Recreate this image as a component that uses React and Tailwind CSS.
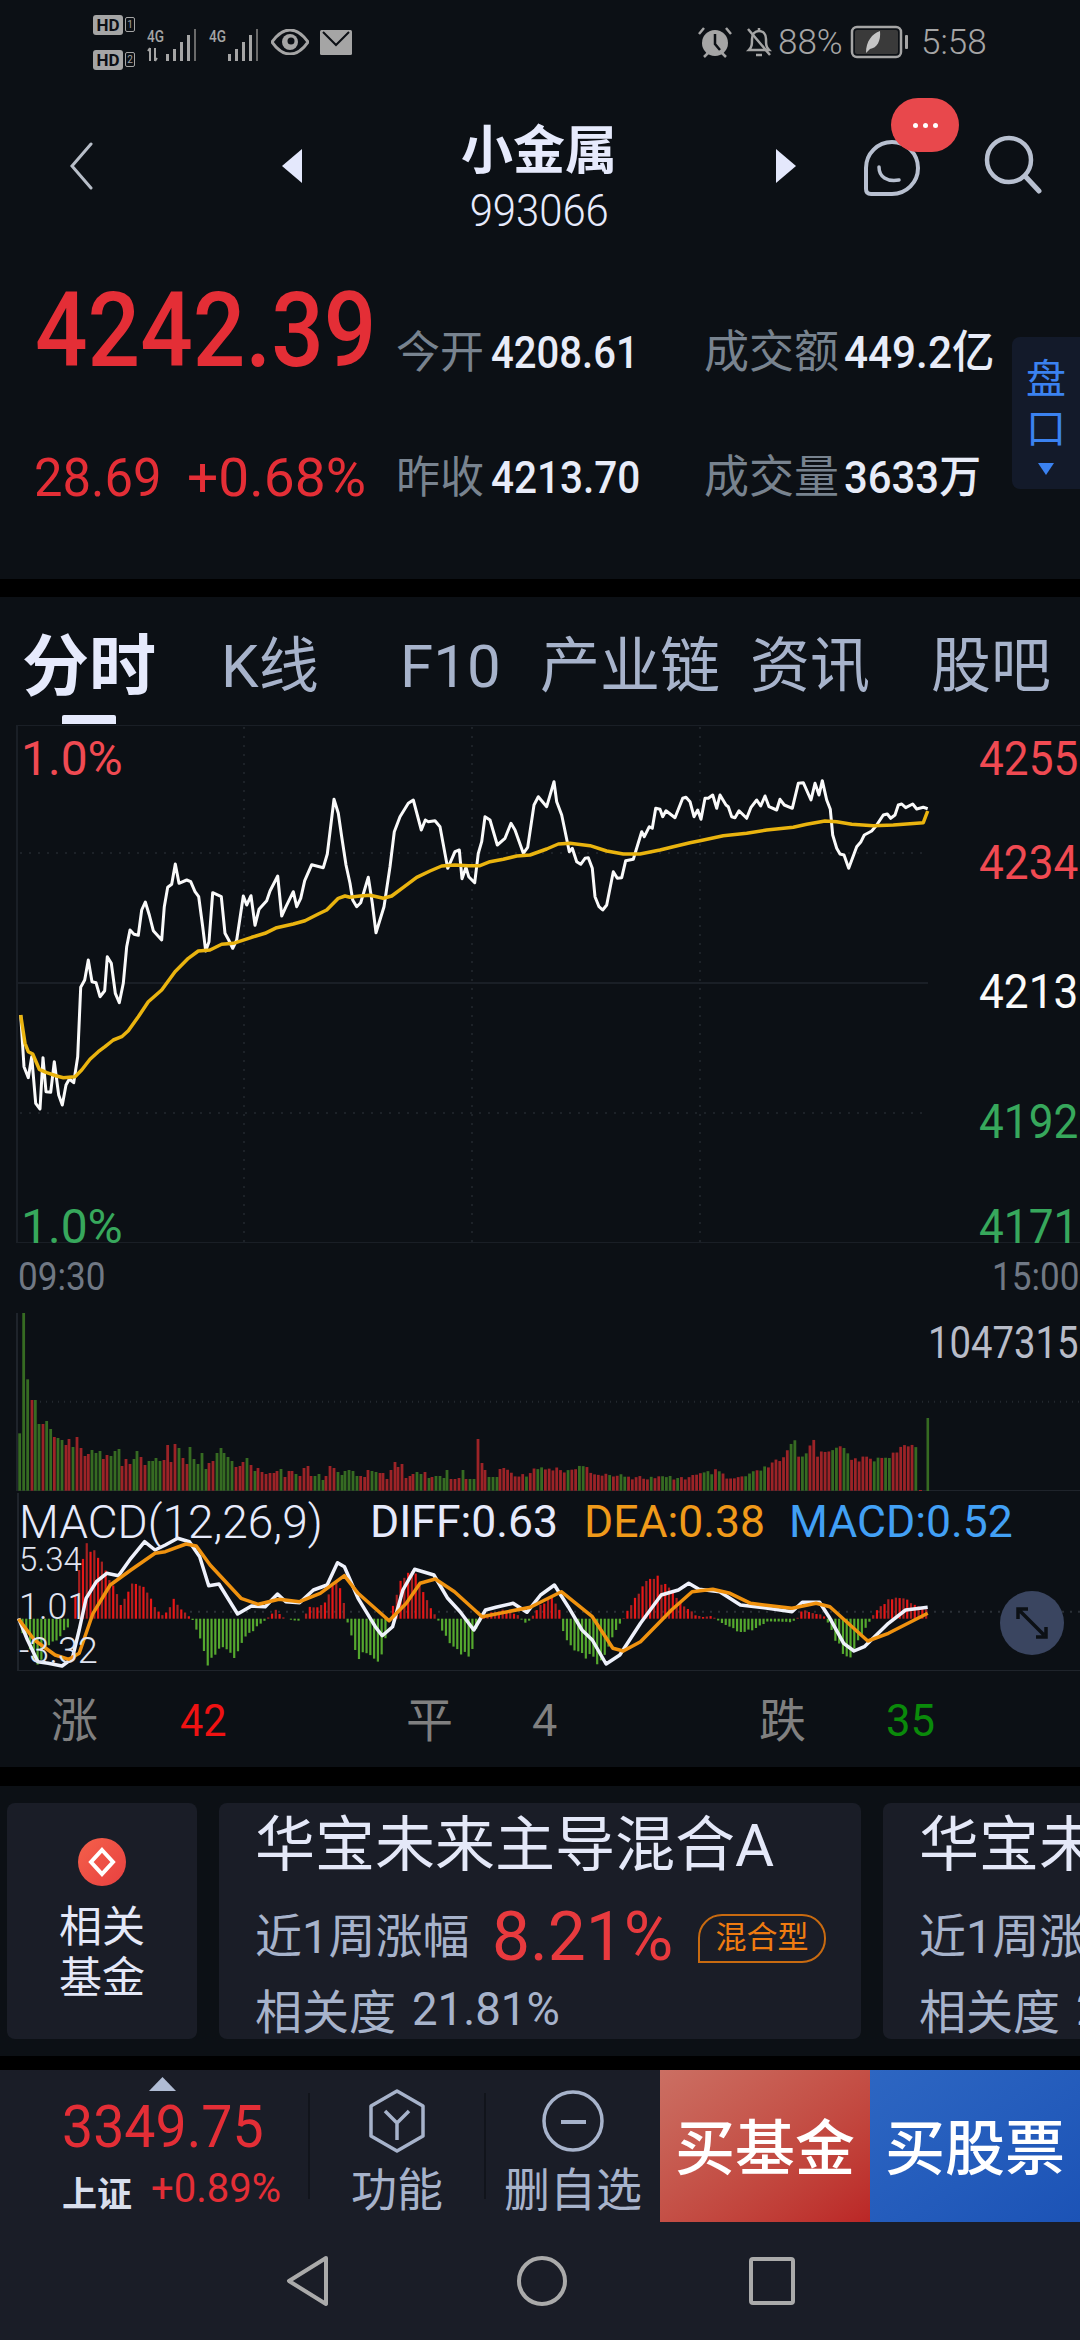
import React from "react";

const crop = (arr, x0, y0, k = 3) => arr.map(([x, y]) => [x0 + x / k, y0 + y / k]);
const pts = (arr) => arr.map(([x, y]) => `${x.toFixed(1)},${y.toFixed(1)}`).join(" ");

const white = [
  ...crop([[32,705],[42,860],[55,893],[65,830],[77,970],[90,987],[99,833],[108,935],[122,937],[133,845],[146,945],[157,975],[168,915],[178,897],[191,908],[203,830],[212,622],[224,600],[235,540],[246,605],[258,608],[270,650],[284,632],[292,530],[304,550],[316,640],[328,668],[340,610],[350,500],[360,450],[372,463],[385,466],[395,390],[406,366],[418,405],[430,452],[455,480],[463,380],[473,322],[485,313],[496,252],[507,310],[530,300],[542,305],[555,335],[566,350],[578,440],[587,513],[597,485],[608,338],[634,350],[645,460],[656,480],[668,505],[680,480],[700,348],[710,375],[723,347],[735,436],[747,388],[770,362],[780,333],[803,288],[815,408],[828,380],[850,335],[860,380],[872,355],[884,302],[905,254],[940,263],[952,222],[972,58],[985,100],[995,170]], 10, 780),
  ...crop([[18,285],[30,340],[38,390],[50,410],[62,398],[85,322],[97,400],[108,488],[132,410],[150,290],[163,185],[180,140],[205,100],[220,90],[244,180],[256,150],[265,155],[285,152],[300,170],[323,295],[345,245],[358,240],[366,326],[378,292],[386,320],[404,338],[415,250],[425,215],[435,140],[450,150],[472,225],[495,205],[513,160],[525,180],[550,250],[563,232],[582,105],[595,80],[620,110],[642,35],[650,95],[665,135],[688,245],[697,235],[710,275],[722,283],[735,265],[745,263],[757,295],[765,380],[777,410],[788,420],[800,405],[820,305],[832,325],[845,323],[857,272],[880,268],[905,185],[913,200],[928,170],[937,175],[947,115],[960,118]], 340, 770),
  ...crop([[68,140],[78,122],[105,143],[128,85],[138,82],[150,95],[162,140],[173,120],[183,148],[195,85],[205,85],[218,75],[230,115],[240,75],[258,105],[265,110],[275,140],[285,143],[297,122],[320,145],[333,112],[350,90],[362,108],[375,78],[387,110],[410,120],[420,88],[433,105],[457,115],[475,40],[490,38],[513,90],[525,40],[537,75],[547,32],[560,90],[571,118],[578,195],[590,235],[600,252],[612,255],[626,295],[650,230],[663,215],[673,195],[695,183],[710,165],[730,135],[742,132],[752,145],[765,135],[775,105],[785,102],[797,113],[818,102],[830,117],[850,112],[863,116]], 640, 770),
];
const yellow = [
  ...crop([[32,705],[45,790],[55,815],[68,822],[88,868],[110,878],[140,888],[160,893],[195,890],[215,870],[240,838],[265,815],[285,800],[310,780],[335,770],[355,752],[385,710],[415,665],[455,630],[495,575],[535,535],[565,513],[600,510],[635,493],[670,490],[725,472],[765,460],[800,443],[850,432],[885,422],[925,402],[950,390],[985,355],[1005,348]], 10, 780),
  ...crop([[30,382],[60,378],[90,376],[130,385],[155,378],[190,352],[230,322],[270,303],[305,288],[345,285],[385,287],[420,287],[450,275],[490,268],[530,258],[570,255],[620,237],[655,222],[690,220],[750,227],[800,243],[850,252],[900,252]], 340, 770),
  ...crop([[60,240],[100,230],[150,218],[180,212],[250,197],[320,190],[380,180],[460,172],[500,163],[555,153],[590,155],[635,163],[700,167],[760,165],[850,158],[863,123]], 640, 770),
];

const macdWhite = [[27,445],[40,510],[55,575],[70,580],[90,588],[105,565],[115,480],[125,385],[140,335],[155,310],[172,317],[190,265],[210,215],[225,240],[240,225],[258,205],[275,215],[290,260],[303,347],[318,342],[345,432],[365,408],[385,410],[403,372],[415,395],[435,398],[455,360],[475,345],[490,278],[500,290],[520,385],[545,470],[555,497],[570,470],[585,360],[602,298],[630,315],[650,385],[668,425],[688,480],[705,420],[720,412],[745,400],[765,427],[785,375],[805,345],[825,410],[845,480],[860,510],[880,582],[900,555],[930,460],[960,375],[985,360],[1000,340],[1015,358],[1045,365],[1075,405],[1115,415],[1150,425],[1165,397],[1190,397],[1205,445],[1225,520],[1240,543],[1255,530],[1290,460],[1315,420],[1347,412]];
const macdOrange = [[27,447],[50,510],[80,555],[100,568],[115,550],[135,430],[160,345],[190,300],[225,250],[240,245],[270,222],[285,228],[305,285],[350,385],[375,403],[405,388],[435,395],[465,370],[500,317],[520,370],[565,452],[590,400],[610,340],[632,327],[660,365],[700,440],[770,412],[815,365],[860,440],[890,535],[905,543],[930,515],[975,420],[1005,365],[1035,358],[1060,370],[1090,400],[1150,415],[1185,400],[1205,410],[1260,513],[1290,490],[1347,430]];
const toM = (a) => a.map(([x, y]) => [x / 1.452, 1470 + y / 3]);

const histEnv = [[27,0],[30,-30],[40,-70],[50,-130],[55,-140],[65,-100],[75,-70],[85,-55],[100,-20],[105,5],[112,110],[125,222],[135,200],[150,160],[165,100],[175,45],[190,95],[205,105],[215,80],[225,30],[235,10],[243,20],[252,55],[265,25],[275,5],[280,-5],[290,-60],[302,-150],[315,-90],[330,-85],[340,-125],[355,-60],[370,-30],[385,-5],[390,5],[400,28],[410,5],[420,-2],[432,-8],[440,3],[450,35],[470,40],[480,95],[490,125],[500,40],[503,0],[510,-50],[520,-115],[535,-100],[550,-125],[560,-60],[565,0],[575,70],[590,150],[600,140],[612,90],[625,30],[635,3],[642,-40],[655,-80],[670,-100],[685,-105],[692,-20],[700,0],[705,15],[730,25],[752,10],[758,-5],[765,-15],[770,0],[785,40],[800,65],[815,15],[818,-50],[835,-90],[850,-110],[870,-135],[885,-70],[900,-15],[905,0],[915,40],[935,105],[955,125],[970,90],[990,45],[1010,10],[1020,5],[1035,8],[1040,-3],[1060,-25],[1075,-43],[1095,-30],[1115,-8],[1150,-10],[1158,3],[1165,25],[1195,10],[1200,-3],[1215,-70],[1232,-125],[1250,-50],[1262,-10],[1270,20],[1290,55],[1310,65],[1330,40],[1347,25]];
const lerp = (env, x) => {
  for (let i = 1; i < env.length; i++) {
    if (x <= env[i][0]) {
      const [a, b] = env[i - 1];
      const [c, d] = env[i];
      return b + ((d - b) * (x - a)) / (c - a || 1);
    }
  }
  return env[env.length - 1][1];
};
const pr = (i) => {
  const v = Math.sin(i * 12.9898) * 43758.5453;
  return v - Math.floor(v);
};
const hist = [];
for (let i = 0; i < 241; i++) {
  const zx = 27 + i * 5.49;
  const v = lerp(histEnv, zx);
  const h = (v * (0.9 + 0.2 * pr(i))) / 3;
  hist.push({ x: zx / 1.452, h, i });
}

const volHead = "59G400 71G36 83G238 96R300 106G300 117G372 129R372 140G363 152G387 163R411 174G414 186G420 198R435 207R417 219G441 231R411 243R444 255R468 265R462 276G450 288G459 300G453 310R477 321R465 333G468 345G453 357G447 366R498 378R477 390R492 402G477 411G453 423R471 435R495 447G483 458G483 468G474 480G483 492R480 503R435 513R486 525R432 537G444 549R474 561R492 570G441 582G477 594G492 606G459 618G507 627R489 639R483 651G459 663G444 672G459 684G471 696G483 708R501 720R498 729R486 741G474 753R495 765G513 774R504 786R516 798R522 810R519 822R519 831R513 843G507 855R531 867R513 876R513 888G522 900R528 912R504 924R498 933R528 945G528 957G522 969G540 978R528 990R498 1002R504 1014G516 1026G525 1035G513 1047G510 1059G513 1071G528 1082R528 1094R531 1104R510 1116G513 1128G516 1140R519 1149R519 1161R537 1173R510 1185R486 1194R501 1206R492 1218R534 1230R528 1239R522 1251G516 1263G522 1275R516 1287G534 1296R531 1308G528 1320G528 1332G534 1341G510 1353R537 1365R537 1377R534 1389G510 1398R537 1410G537 1422G537 1434R417 1446R489 1455R510 1467G531 1479G531 1491G531 1500R507"
  .split(" ")
  .map((s) => {
    const m = s.match(/(\d+)([RG])(\d+)/);
    return { x: +m[1] / 3, red: m[2] === "R", top: 1300 + +m[3] / 3 };
  });
const volEnv = [[725,1048],[735,1050],[745,1060],[760,1068],[780,1040],[800,1050],[810,1040],[820,1060],[835,1048],[852,1042],[870,1070],[895,1060],[920,1072],[960,1075],[1000,1072],[1040,1055],[1060,1080],[1090,1065],[1115,1040],[1140,1010],[1153,958],[1160,1015],[1170,1005],[1181,955],[1187,1005],[1210,985],[1220,972],[1235,1020],[1260,1015],[1270,1018],[1295,1005],[1310,985],[1325,975],[1332,985]];
const volTail = [];
for (let x = 503.8, i = 0; x < 918; x += 3.78, i++) {
  const z = lerp(volEnv, x * 1.452);
  const spike = z < 965;
  volTail.push({
    x,
    red: spike || Math.sin(i * 0.55) + Math.sin(i * 1.7 + 1) > -0.35,
    top: 1120 + (z + (spike ? 0 : (pr(i + 7) - 0.5) * 16)) / 3,
  });
}
const bars = [...volHead, ...volTail];

function Label({ children, className }) {
  return <div className={"absolute whitespace-nowrap leading-none " + className}>{children}</div>;
}

function HD({ n }) {
  return (
    <div className="flex items-center gap-[2px]">
      <div className="w-[30px] h-[20px] bg-[#a5a5a5] rounded-[3px] text-[#0c1015] text-[17px] font-bold leading-[20px] text-center">HD</div>
      <div className="w-[10px] h-[15px] border border-[#a5a5a5] rounded-[2px] text-[#a5a5a5] text-[10px] leading-[13px] text-center">{n}</div>
    </div>
  );
}

function Signal({ arrows, className }) {
  return (
    <svg width="50" height="34" viewBox="0 0 50 34" className={className}>
      <text x="0" y="14" fontSize="16" fill="#a5a5a5" fontWeight="500" fontFamily="Roboto" textLength="17" lengthAdjust="spacingAndGlyphs">4G</text>
      {arrows && <path d="M3 33V20M3 20l-2 3M8 20v13M8 33l2-3" stroke="#a5a5a5" strokeWidth="2" fill="none" />}
      <g fill="#a5a5a5">
        <rect x="19" y="26" width="3" height="7" />
        <rect x="26" y="21" width="3" height="12" />
        <rect x="33" y="14" width="3" height="19" />
        <rect x="40" y="7" width="3" height="26" />
        <rect x="47" y="1" width="2" height="32" fill="#6a6a6a" />
      </g>
    </svg>
  );
}

function StatusBar() {
  return (
    <div className="h-[84px] flex items-center pl-[93px] text-[#a5a5a5]">
      <div className="flex flex-col gap-[15px] w-[54px]">
        <HD n="1" />
        <HD n="2" />
      </div>
      <Signal arrows className="mt-[5px]" />
      <Signal className="ml-[12px] mt-[5px]" />
      <svg width="38" height="26" viewBox="0 0 38 26" className="ml-[12px]">
        <path d="M1 13C8 3 14 1 19 1s11 2 18 12C30 23 24 25 19 25S8 23 1 13Z" fill="none" stroke="#a5a5a5" strokeWidth="3" />
        <circle cx="19" cy="13" r="8" fill="#a5a5a5" />
        <circle cx="20" cy="12" r="3.5" fill="#0c1015" />
      </svg>
      <svg width="32" height="25" viewBox="0 0 32 25" className="ml-[11px]">
        <rect width="32" height="25" rx="1.5" fill="#a5a5a5" />
        <path d="M3 2l13 13L29 2" fill="none" stroke="#0c1015" strokeWidth="2" />
      </svg>
      <svg width="34" height="32" viewBox="0 0 34 32" className="ml-[346px]">
        <circle cx="17" cy="17" r="13" fill="#a5a5a5" />
        <path d="M17 8v10l5 6" fill="none" stroke="#0c1015" strokeWidth="2.5" />
        <path d="M1 8l5-6M33 8l-5-6M6 31l4-4M28 31l-4-4" stroke="#a5a5a5" strokeWidth="2.5" />
      </svg>
      <svg width="28" height="32" viewBox="0 0 28 32" className="ml-[13px]">
        <path d="M4 24c3-3 3-6 3-11 0-5 3-8 7-8s7 3 7 8c0 5 0 8 3 11Z" fill="none" stroke="#a5a5a5" strokeWidth="2.5" />
        <path d="M11 29h6M14 2v3M3 3l22 26" stroke="#a5a5a5" strokeWidth="2.5" />
      </svg>
      <div className="w-[72px] ml-[5px] text-[35px] font-light leading-none">88%</div>
      <svg width="60" height="34" viewBox="0 0 60 34">
        <rect x="2" y="2" width="49" height="30" rx="5" fill="none" stroke="#a5a5a5" strokeWidth="2.5" />
        <rect x="5" y="5" width="43" height="24" rx="2" fill="#3a3a3a" />
        <path d="M16 28c0-12 6-19 14-22 1 10-3 17-10 18" fill="#c5c5c5" />
        <rect x="55" y="10" width="3" height="14" rx="1" fill="#a5a5a5" />
      </svg>
      <div className="ml-[11px] text-[35px] font-light leading-none">5:58</div>
    </div>
  );
}

function NavBar() {
  return (
    <div className="h-[156px] flex items-center pl-[69px]">
      <svg width="24" height="48" viewBox="0 0 24 48" className="mt-[8px]">
        <path d="M22 2L3 24l19 22" fill="none" stroke="#b8bec8" strokeWidth="3" strokeLinecap="round" />
      </svg>
      <svg width="20" height="34" viewBox="0 0 20 34" className="ml-[189px] mt-[8px]">
        <path d="M20 0v34L0 17Z" fill="#e4e8fc" />
      </svg>
      <div className="w-[474px] flex flex-col items-center text-[#e6eafc] mt-[32px]">
        <div className="h-[56px] text-[52px] font-bold leading-[56px]">小金属</div>
        <div className="h-[44px] text-[44px] font-light leading-[44px] mt-[9px]">
          <span className="inline-block scale-x-[.95]">993066</span>
        </div>
      </div>
      <svg width="20" height="34" viewBox="0 0 20 34" className="mt-[8px]">
        <path d="M0 0v34l20-17Z" fill="#e4e8fc" />
      </svg>
      <svg width="58" height="58" viewBox="0 0 58 58" className="ml-[67px] mt-[12px]">
        <path d="M3 29a26 26 0 1 1 26 26H8q-5 0-5-5z" fill="none" stroke="#b8c0d0" strokeWidth="4" />
        <path d="M16 28c0 10 8 15 20 13" fill="none" stroke="#b8c0d0" strokeWidth="3.5" strokeLinecap="round" />
      </svg>
      <svg width="60" height="60" viewBox="0 0 60 60" className="ml-[62px] mt-[4px]">
        <circle cx="26" cy="26" r="22" fill="none" stroke="#b8c0d0" strokeWidth="4.5" />
        <path d="M42 42l14 15" stroke="#b8c0d0" strokeWidth="5" strokeLinecap="round" />
      </svg>
    </div>
  );
}

function Quote() {
  return (
    <div className="pl-[35px]">
      <div className="h-[143px] flex items-end">
        <div className="w-[361px] text-[104px] text-[#e42e36] font-medium leading-[104px]">
          <span className="inline-block origin-left scale-x-[.89]">4242.39</span>
        </div>
        <div className="w-[95px] text-[44px] text-[#78838f] leading-[60px]">今开</div>
        <div className="w-[213px] text-[45px] text-[#e8ecf8] font-medium leading-[60px]">
          <span className="inline-block origin-left scale-x-[.89]">4208.61</span>
        </div>
        <div className="w-[140px] text-[45px] text-[#78838f] leading-[60px]">成交额</div>
        <div className="text-[45px] text-[#e8ecf8] font-medium leading-[60px] whitespace-nowrap">
          <span className="inline-block origin-left scale-x-[.94]">449.2亿</span>
        </div>
      </div>
      <div className="h-[60px] mt-[65px] flex items-center">
        <div className="w-[153px] text-[54px] text-[#e42e36] leading-none -ml-[1px]">
          <span className="inline-block origin-left scale-x-[.94]">28.69</span>
        </div>
        <div className="w-[209px] text-[54px] text-[#e42e36] leading-none whitespace-nowrap">
          <span className="inline-block origin-left scale-x-[1.02]">+0.68%</span>
        </div>
        <div className="w-[95px] text-[44px] text-[#78838f]">昨收</div>
        <div className="w-[213px] text-[45px] text-[#e8ecf8] font-medium">
          <span className="inline-block origin-left scale-x-[.9]">4213.70</span>
        </div>
        <div className="w-[140px] text-[45px] text-[#78838f]">成交量</div>
        <div className="text-[45px] text-[#e8ecf8] font-medium whitespace-nowrap">
          <span className="inline-block origin-left scale-x-[.93]">3633万</span>
        </div>
      </div>
    </div>
  );
}

function Tabs() {
  return (
    <div className="h-[128px] relative text-[60px] text-[#a7b3cb]">
      <div className="h-[140px] flex items-center pl-[22px]">
        <div className="w-[199px] text-[67px] font-bold text-[#e6eafc]">分时</div>
        <div className="w-[179px]">K线</div>
        <div className="w-[140px]">F10</div>
        <div className="w-[210px]">产业链</div>
        <div className="w-[181px]">资讯</div>
        <div>股吧</div>
      </div>
      <div className="absolute left-[62px] top-[118px] w-[54px] h-[9px] bg-[#e6eafc] rounded-t-[2px]" />
    </div>
  );
}

function PriceChart() {
  return (
    <div className="h-[518px] relative text-[48px]">
      <svg width="1080" height="518" viewBox="0 725 1080 518" className="absolute inset-0">
        <path d="M17 725H1080M17 725V1243M17 1243H1080M17 983H928" stroke="#1a1f26" strokeWidth="2" fill="none" />
        <path d="M20 853H928M20 1113H928M244 727V1243M472 727V1243M700 727V1243" stroke="#1d2228" strokeWidth="2" strokeDasharray="2 7" fill="none" />
        <polyline points={pts(white)} fill="none" stroke="#fafafa" strokeWidth="3" strokeLinejoin="round" />
        <polyline points={pts(yellow)} fill="none" stroke="#eab40f" strokeWidth="3.5" strokeLinejoin="round" />
      </svg>
      <Label className="left-[21px] top-[10px] text-[#f04a52]">1.0%</Label>
      <Label className="left-[21px] top-[478px] text-[#37a85c]">1.0%</Label>
      <Label className="left-[979px] top-[10px] text-[#f04a52] origin-left scale-x-[.92]">4255</Label>
      <Label className="left-[979px] top-[114px] text-[#f04a52] origin-left scale-x-[.92]">4234</Label>
      <Label className="left-[979px] top-[243px] text-[#fafafa] origin-left scale-x-[.92]">4213</Label>
      <Label className="left-[979px] top-[373px] text-[#37a85c] origin-left scale-x-[.92]">4192</Label>
      <Label className="left-[979px] top-[478px] text-[#37a85c] origin-left scale-x-[.92]">4171</Label>
    </div>
  );
}

function TimeAxis() {
  return (
    <div className="h-[70px] pt-[15px] px-[18px] flex justify-between text-[39px] text-[#707884] leading-none">
      <div className="w-[90px]">
        <span className="inline-block origin-left scale-x-[.9]">09:30</span>
      </div>
      <div className="w-[86px] -mr-[16px]">
        <span className="inline-block origin-left scale-x-[.9]">15:00</span>
      </div>
    </div>
  );
}

function Volume() {
  return (
    <div className="h-[178px] relative">
      <svg width="1080" height="178" viewBox="0 1313 1080 178" className="absolute inset-0">
        <path d="M17 1313V1491M17 1491H1080" stroke="#1f242b" strokeWidth="2" fill="none" />
        <path d="M40 1401.7H1080" stroke="#23282f" strokeWidth="2" strokeDasharray="1 5" fill="none" />
        {bars.map((b, i) => (
          <rect key={i} x={b.x - 1.4} y={b.top} width="2.8" height={1490.7 - b.top} fill={b.red ? "#9c2327" : "#366b22"} />
        ))}
        <rect x="919" y="1490" width="3" height="1" fill="#9c2327" />
        <rect x="926.5" y="1418" width="2.6" height="73" fill="#366b22" />
      </svg>
      <Label className="left-[928px] top-[8px] text-[44px] text-[#b8bcc8] origin-left scale-x-[.87]">1047315</Label>
    </div>
  );
}

function Macd() {
  return (
    <div className="h-[180px] relative">
      <svg width="1080" height="180" viewBox="0 1491 1080 180" className="absolute inset-0">
        <path d="M18 1493V1671M18 1671H1080" stroke="#1f242b" strokeWidth="2" fill="none" />
        <path d="M190 1611.7H1080" stroke="#2a2f36" strokeWidth="2" strokeDasharray="2 6" fill="none" />
        {hist.map((b) =>
          Math.abs(b.h) < 0.5 ? null : (
            <rect
              key={b.i}
              x={b.x - 1}
              y={b.h > 0 ? 1618.7 - b.h : 1618.7}
              width="2.2"
              height={Math.abs(b.h)}
              fill={b.h > 0 ? (b.i % 2 ? "#e81616" : "#a82020") : "#55a82e"}
            />
          )
        )}
        <polyline points={pts(toM(macdWhite))} fill="none" stroke="#eef1fb" strokeWidth="3.5" strokeLinejoin="round" />
        <polyline points={pts(toM(macdOrange))} fill="none" stroke="#f0920f" strokeWidth="3.5" strokeLinejoin="round" />
      </svg>
      <Label className="left-[19px] top-[8px] text-[46px] text-[#e6eafc] font-light">MACD(12,26,9)</Label>
      <Label className="left-[370px] top-[9px] text-[44.5px] text-[#e6eafc]">DIFF:0.63</Label>
      <Label className="left-[584px] top-[9px] text-[44.5px] text-[#f09a1a]">DEA:0.38</Label>
      <Label className="left-[789px] top-[9px] text-[44.5px] text-[#42a0f5]">MACD:0.52</Label>
      <Label className="left-[19px] top-[52px] text-[33px] text-[#e0e4f0] font-light">5.34</Label>
      <Label className="left-[19px] top-[98px] text-[36px] text-[#e0e4f0] font-light">1.01</Label>
      <Label className="left-[19px] top-[142px] text-[36px] text-[#e0e4f0] font-light">-3.32</Label>
      <div className="absolute left-[1000px] top-[100px] w-[64px] h-[64px] rounded-full bg-[#3a4560] flex items-center justify-center">
        <svg width="36" height="36" viewBox="0 0 36 36">
          <path d="M6 6l24 24M4 14V4h10M32 22v10H22" fill="none" stroke="#0c1015" strokeWidth="3.5" />
        </svg>
      </div>
    </div>
  );
}

function Stats() {
  return (
    <div className="h-[96px] flex items-center pl-[51px] pt-[4px] text-[47px]">
      <div className="w-[129px] text-[#808080]">涨</div>
      <div className="w-[226px] text-[#f01212] text-[45px]">
        <span className="inline-block origin-left scale-x-[.92]">42</span>
      </div>
      <div className="w-[126px] text-[#808080]">平</div>
      <div className="w-[227px] text-[#808080] text-[45px]">4</div>
      <div className="w-[127px] text-[#808080]">跌</div>
      <div className="text-[#0a8a0a] text-[45px]">
        <span className="inline-block origin-left scale-x-[.97]">35</span>
      </div>
    </div>
  );
}

function FundCard({ className }) {
  return (
    <div className={"h-[236px] bg-[#1a1d27] rounded-[8px] shrink-0 pl-[36px] pt-[7px] overflow-hidden " + className}>
      <div className="h-[72px] text-[60px] leading-[72px] text-[#e4e8f8] whitespace-nowrap">华宝未来主导混合A</div>
      <div className="h-[76px] mt-[17px] flex items-center whitespace-nowrap">
        <div className="w-[237px] text-[47px] text-[#a7b3cb]">近1周涨幅</div>
        <div className="w-[206px] text-[69px] text-[#e83a3e]">
          <span className="inline-block origin-left scale-x-[.98]">8.21%</span>
        </div>
        <div className="w-[128px] h-[49px] border-2 border-[#c86a10] rounded-[24px] rounded-bl-none text-[31px] leading-[44px] text-[#f07c10] text-center shrink-0 mt-[2px]">混合型</div>
      </div>
      <div className="h-[52px] mt-[12px] flex items-center whitespace-nowrap text-[#a7b3cb]">
        <div className="w-[157px] text-[47px]">相关度</div>
        <div className="text-[46px] -mt-[8px]">
          <span className="inline-block origin-left scale-x-[.99]">21.81%</span>
        </div>
      </div>
    </div>
  );
}

function Funds() {
  return (
    <div className="h-[270px] bg-[#0c1015] pt-[17px] pl-[7px] flex gap-[22px] overflow-hidden">
      <div className="w-[190px] h-[236px] bg-[#1a1d27] rounded-[8px] shrink-0 flex flex-col items-center pt-[35px] text-[43px] leading-[51px] text-[#e4e8f8]">
        <svg width="48" height="48" viewBox="0 0 48 48">
          <defs>
            <linearGradient id="fg" x1="0" y1="0" x2="1" y2="1">
              <stop offset="0" stopColor="#f4604a" />
              <stop offset="1" stopColor="#e84040" />
            </linearGradient>
          </defs>
          <circle cx="24" cy="24" r="24" fill="url(#fg)" />
          <path d="M24 12l11 12-11 12-11-12Z" fill="none" stroke="#fff" strokeWidth="4" />
        </svg>
        <div className="mt-[16px]">相关</div>
        <div>基金</div>
      </div>
      <FundCard className="w-[642px]" />
      <FundCard className="w-[642px]" />
    </div>
  );
}

function BottomBar() {
  return (
    <div className="h-[270px] bg-[#1a1d27]">
      <div className="h-[152px] flex">
        <div className="w-[308px] relative flex flex-col pl-[62px]">
          <svg width="27" height="14" viewBox="0 0 27 14" className="ml-[87px] mt-[7px]">
            <path d="M13.5 0L27 14H0Z" fill="#b0bcd4" />
          </svg>
          <div className="mt-[7px] h-[58px] text-[59px] leading-[58px] text-[#e42e36]">
            <span className="inline-block origin-left scale-x-[.94]">3349.75</span>
          </div>
          <div className="flex items-center h-[50px] mt-[12px]">
            <div className="w-[89px] text-[35px] font-bold text-[#d8deec] mt-[6px]">上证</div>
            <div className="text-[40px] text-[#e42e36] -mt-[8px]">+0.89%</div>
          </div>
        </div>
        <div className="w-[176px] flex flex-col items-center border-l-2 border-[#11141b] my-[23px] relative">
          <svg width="60" height="64" viewBox="0 0 60 64" className="-mt-[4px] shrink-0">
            <path d="M30 2L56 17V47L30 62L4 47V17Z" fill="none" stroke="#a7b3cb" strokeWidth="3.5" strokeLinejoin="round" />
            <path d="M18 22l12 12 12-12M30 34v17" fill="none" stroke="#a7b3cb" strokeWidth="3.5" />
          </svg>
          <div className="text-[46px] leading-[56px] text-[#a7b3cb] mt-[9px] shrink-0">功能</div>
        </div>
        <div className="w-[176px] flex flex-col items-center border-l-2 border-[#11141b] my-[23px]">
          <svg width="64" height="64" viewBox="0 0 64 64" className="-mt-[4px] shrink-0">
            <circle cx="32" cy="32" r="29" fill="none" stroke="#a7b3cb" strokeWidth="3.5" />
            <path d="M20 33h25" stroke="#a7b3cb" strokeWidth="4" />
          </svg>
          <div className="text-[46px] leading-[56px] text-[#a7b3cb] mt-[9px] whitespace-nowrap shrink-0">删自选</div>
        </div>
        <div className="w-[210px] bg-linear-to-br from-[#cb6f63] to-[#bb2626] flex items-center justify-center pt-[8px] text-[60px] font-medium text-white">买基金</div>
        <div className="flex-1 bg-linear-to-br from-[#2d66c2] to-[#1c53b6] flex items-center justify-center pt-[8px] text-[60px] font-medium text-white">买股票</div>
      </div>
      <div className="h-[118px] flex items-center justify-center">
        <svg width="44" height="52" viewBox="0 0 44 52">
          <path d="M40 3L3 26l37 23Z" fill="none" stroke="#aaaaaa" strokeWidth="4" strokeLinejoin="round" />
        </svg>
        <svg width="52" height="52" viewBox="0 0 52 52" className="ml-[186px]">
          <circle cx="26" cy="26" r="23" fill="none" stroke="#aaaaaa" strokeWidth="4" />
        </svg>
        <svg width="46" height="48" viewBox="0 0 46 48" className="ml-[181px]">
          <rect x="2" y="2" width="42" height="44" rx="2" fill="none" stroke="#aaaaaa" strokeWidth="4" />
        </svg>
      </div>
    </div>
  );
}

export default function App() {
  return (
    <div className="w-[1080px] h-[2340px] bg-black overflow-hidden font-['Roboto','Noto_Sans_CJK_SC',sans-serif]">
      <section className="h-[579px] bg-[#0c1015] relative">
        <StatusBar />
        <NavBar />
        <Quote />
        <div className="absolute left-[891px] top-[98px] w-[68px] h-[54px] rounded-full bg-[#e8484c] flex items-center justify-center gap-[5px]">
          <span className="w-[5px] h-[5px] rounded-full bg-white" />
          <span className="w-[5px] h-[5px] rounded-full bg-white" />
          <span className="w-[5px] h-[5px] rounded-full bg-white" />
        </div>
        <div className="absolute left-[1012px] top-[337px] w-[68px] h-[152px] bg-[#131a2a] rounded-l-[8px] flex flex-col items-center pt-[18px] text-[40px] leading-[50px] text-[#3b82f0]">
          <div>盘</div>
          <div>口</div>
          <svg width="16" height="12" viewBox="0 0 16 12" className="mt-[8px]">
            <path d="M0 0h16L8 12Z" fill="#3b82f0" />
          </svg>
        </div>
      </section>
      <section className="h-[1170px] mt-[18px] bg-[#0c1015]">
        <Tabs />
        <PriceChart />
        <TimeAxis />
        <Volume />
        <Macd />
        <Stats />
      </section>
      <div className="mt-[19px]">
        <Funds />
      </div>
      <div className="mt-[14px]">
        <BottomBar />
      </div>
    </div>
  );
}
